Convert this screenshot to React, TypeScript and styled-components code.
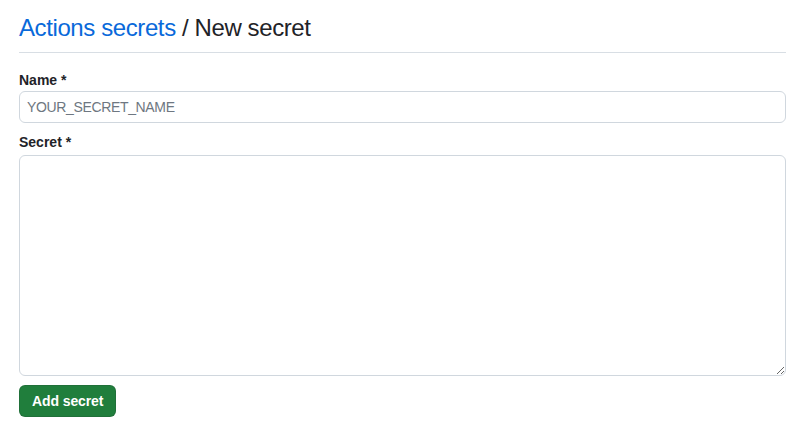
import styled, { createGlobalStyle } from "styled-components";

const GlobalStyle = createGlobalStyle`
  body {
    margin: 0;
    background: #ffffff;
    font-family: "Liberation Sans", Arial, sans-serif;
    color: #1f2328;
  }
`;

const Page = styled.div`
  padding: 13px 16px 0 19px;
`;

const Header = styled.div`
  padding-bottom: 9px;
  border-bottom: 1px solid #d8dee4;
  margin-bottom: 17px;
`;

const Title = styled.h2`
  margin: 0;
  font-size: 24px;
  line-height: 30px;
  font-weight: 400;
  letter-spacing: -0.4px;
  color: #1f2328;

  & a {
    color: #0969da;
    text-decoration: none;
  }
`;

const Form = styled.form`
  display: flex;
  flex-direction: column;
`;

const Group = styled.div`
  display: flex;
  flex-direction: column;
  margin-bottom: 9px;
`;

const Label = styled.label`
  font-size: 14px;
  line-height: 21px;
  font-weight: 700;
  color: #1f2328;
`;

const Input = styled.input`
  box-sizing: border-box;
  height: 32px;
  width: 100%;
  padding: 5px 7px;
  font-family: inherit;
  font-size: 14px;
  letter-spacing: -0.35px;
  color: #1f2328;
  background: #ffffff;
  border: 1px solid #d0d7de;
  border-radius: 6px;
  outline: none;

  &::placeholder {
    color: #6e7781;
  }
`;

const TextArea = styled.textarea<{ $height: number }>`
  box-sizing: border-box;
  display: block;
  width: 100%;
  height: ${(p) => p.$height}px;
  margin-top: 2px;
  padding: 8px 7px;
  font-family: inherit;
  font-size: 14px;
  background: #ffffff;
  border: 1px solid #d0d7de;
  border-radius: 6px;
  outline: none;
`;

const Button = styled.button`
  align-self: flex-start;
  height: 32px;
  padding: 0 12px;
  font-family: inherit;
  font-size: 14px;
  font-weight: 700;
  letter-spacing: -0.1px;
  color: #ffffff;
  background: #207e3c;
  border: 1px solid rgba(31, 35, 40, 0.15);
  border-radius: 6px;
  cursor: pointer;
`;

export default function App() {
  return (
    <>
      <GlobalStyle />
      <Page>
        <Header>
          <Title>
            <a href="#">Actions secrets</a> / New secret
          </Title>
        </Header>
        <Form onSubmit={(e) => e.preventDefault()}>
          <Group>
            <Label htmlFor="secret_name">Name *</Label>
            <Input id="secret_name" placeholder="YOUR_SECRET_NAME" />
          </Group>
          <Group>
            <Label htmlFor="secret_value">Secret *</Label>
            <TextArea id="secret_value" $height={221} />
          </Group>
          <Button type="submit">Add secret</Button>
        </Form>
      </Page>
    </>
  );
}
